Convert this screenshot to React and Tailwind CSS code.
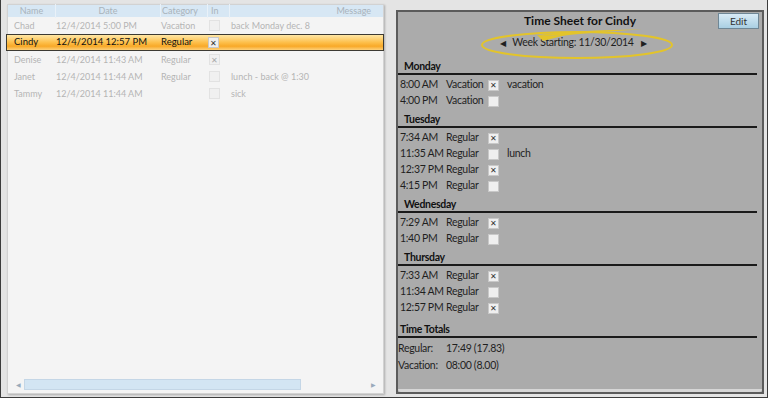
const font = { fontFamily: 'Lato, "Open Sans", sans-serif' };

const people = [
  { name: "Chad", date: "12/4/2014 5:00 PM", cat: "Vacation", in: false, msg: "back Monday dec. 8" },
  { name: "Cindy", date: "12/4/2014 12:57 PM", cat: "Regular", in: true, msg: "", sel: true },
  { name: "Denise", date: "12/4/2014 11:43 AM", cat: "Regular", in: true, msg: "" },
  { name: "Janet", date: "12/4/2014 11:44 AM", cat: "Regular", in: false, msg: "lunch - back @ 1:30" },
  { name: "Tammy", date: "12/4/2014 11:44 AM", cat: "", in: false, msg: "sick" },
];

const days = [
  {
    day: "Monday",
    rows: [
      ["8:00 AM", "Vacation", true, "vacation"],
      ["4:00 PM", "Vacation", false, ""],
    ],
  },
  {
    day: "Tuesday",
    rows: [
      ["7:34 AM", "Regular", true, ""],
      ["11:35 AM", "Regular", false, "lunch"],
      ["12:37 PM", "Regular", true, ""],
      ["4:15 PM", "Regular", false, ""],
    ],
  },
  {
    day: "Wednesday",
    rows: [
      ["7:29 AM", "Regular", true, ""],
      ["1:40 PM", "Regular", false, ""],
    ],
  },
  {
    day: "Thursday",
    rows: [
      ["7:33 AM", "Regular", true, ""],
      ["11:34 AM", "Regular", false, ""],
      ["12:57 PM", "Regular", true, ""],
    ],
  },
];

const Check = ({ on, faded }) => (
  <span
    className={`flex h-[11px] w-[11px] items-center justify-center border text-[8px] leading-none ${
      faded ? "border-[#e2e2e2] bg-[#f0f0f0] text-[#aaa]" : "border-[#c8c8c8] bg-[#efefef] text-[#333]"
    }`}
  >
    {on ? "✕" : ""}
  </span>
);

const LeftTable = () => (
  <div className="mt-[4px] ml-[6px] flex h-[390px] w-[377px] flex-col border border-[#d2d2d2] bg-[#f4f4f4] shadow-[1px_1px_2px_rgba(0,0,0,0.25)]">
    <div className="flex h-[12px] items-center bg-[#d7e7f4] text-[9px] whitespace-nowrap text-[#a9b3bb]">
      <span className="w-[48px] border-r border-[#e9f1f8] text-center">Name</span>
      <span className="w-[105px] border-r border-[#e9f1f8] text-center">Date</span>
      <span className="w-[47px] border-r border-[#e9f1f8] pl-[1px]">Category</span>
      <span className="w-[22px] border-r border-[#e9f1f8] pl-[3px]">In</span>
      <span className="flex-1 pr-[12px] text-right">Message</span>
    </div>
    <div className="flex-1">
      {people.map((p) =>
        p.sel ? (
          <div
            key={p.name}
            className="-ml-[2px] flex h-[17px] w-[378px] items-center border border-[#3c3a33] bg-[linear-gradient(#ffe7a6,#fdbf4a_50%,#f8a928_75%,#fdd07a)] text-[9.5px] whitespace-nowrap text-[#111]"
          >
            <span className="w-[49px] pl-[7px]">{p.name}</span>
            <span className="w-[105px]">{p.date}</span>
            <span className="w-[47px]">{p.cat}</span>
            <span className="w-[22px]">
              <Check on={p.in} />
            </span>
            <span>{p.msg}</span>
          </div>
        ) : (
          <div key={p.name} className="flex h-[17px] items-center text-[9px] whitespace-nowrap text-[#b4b4b4]">
            <span className="w-[48px] pl-[6px]">{p.name}</span>
            <span className="w-[105px]">{p.date}</span>
            <span className="w-[48px]">{p.cat}</span>
            <span className="w-[22px]">
              <Check on={p.in} faded />
            </span>
            <span>{p.msg}</span>
          </div>
        )
      )}
    </div>
    <div className="mx-[5px] mb-[3px] flex h-[12px] items-center">
      <span className="flex h-[12px] w-[11px] items-center justify-center text-[6px] text-[#9ab]">◀</span>
      <div className="h-[11px] w-[277px] border border-[#c4d6e6] bg-[#d3e5f3]" />
      <div className="flex-1" />
      <span className="flex h-[12px] w-[10px] items-center justify-center text-[6px] text-[#9ab]">▶</span>
    </div>
  </div>
);

const RightPanel = () => (
  <div className="relative mt-[10px] ml-[12px] flex h-[384px] w-[368px] flex-col border-2 border-[#5b5b5b] bg-[#ababab] text-[10.5px] tracking-[-0.3px] whitespace-nowrap text-[#1f1f1f]">
    <div className="relative flex h-[18px] items-center justify-center">
      <span className="text-[12px] font-bold tracking-normal text-[#111]">Time Sheet for Cindy</span>
      <button className="absolute top-[1px] right-[3px] h-[16px] w-[41px] border border-[#6f8796] bg-[linear-gradient(#d9ebf6,#a9cfe3)] text-[10px] tracking-normal text-[#333]">
        Edit
      </button>
    </div>
    <div className="mt-[5px] flex h-[16px] items-center justify-center gap-[7px] pr-[14px]">
      <span className="text-[8px]">◀</span>
      <span>Week Starting: 11/30/2014</span>
      <span className="text-[8px]">▶</span>
    </div>
    <div className="mt-[8px] flex flex-col">
      {days.map((d) => (
        <div key={d.day} className="mb-[3px]">
          <div className="mr-[5px] h-[16px] border-b-2 border-[#1a1a1a] pl-[6px] leading-[14px] font-bold text-[#111]">
            {d.day}
          </div>
          <div className="pt-[2px]">
            {d.rows.map((r, i) => (
              <div key={i} className="flex h-[16px] items-center">
                <span className="w-[48px] pl-[2px]">{r[0]}</span>
                <span className="w-[42px]">{r[1]}</span>
                <span className="w-[19px]">
                  <Check on={r[2]} />
                </span>
                <span>{r[3]}</span>
              </div>
            ))}
          </div>
        </div>
      ))}
      <div className="mt-[3px] mr-[5px] h-[16px] border-b-2 border-[#1a1a1a] pl-[2px] leading-[14px] font-bold text-[#111]">
        Time Totals
      </div>
      <div className="pt-[2px]">
        <div className="flex h-[17px] items-center">
          <span className="w-[48px]">Regular:</span>
          <span>17:49 (17.83)</span>
        </div>
        <div className="flex h-[17px] items-center">
          <span className="w-[48px]">Vacation:</span>
          <span>08:00 (8.00)</span>
        </div>
      </div>
    </div>
    <div className="mt-auto h-[3px] rounded-b-[3px] bg-[#d6d6d6]" />
    <svg className="pointer-events-none absolute top-[17px] left-[82px]" width="200" height="34" viewBox="0 0 200 34">
      <ellipse cx="97" cy="16" rx="95" ry="13" fill="none" stroke="#e3c42a" strokeWidth="2" />
      <path d="M58 6 Q95 1 162 0.5 Q100 4 82 7 Z" fill="#e3c42a" />
      <path d="M57 6 L63 12 L82 7 Z" fill="#e3c42a" />
    </svg>
  </div>
);

export default function App() {
  return (
    <div
      className="flex h-[398px] w-[768px] border-r border-b border-l border-[#3c3c3c] bg-[#e4e4e4]"
      style={font}
    >
      <LeftTable />
      <RightPanel />
    </div>
  );
}
